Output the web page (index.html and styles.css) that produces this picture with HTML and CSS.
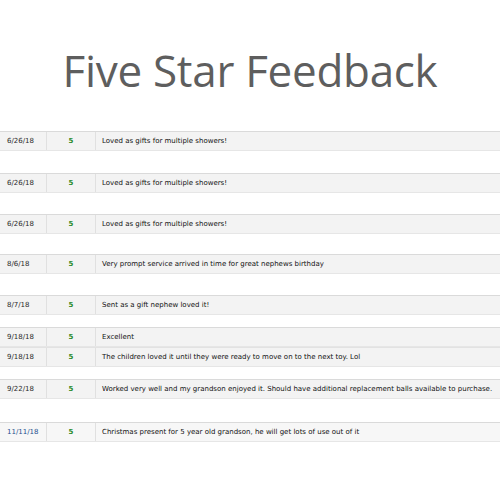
FILE: index.html
```html
<!DOCTYPE html>
<html>
<head>
<meta charset="utf-8">
<link rel="stylesheet" href="styles.css">
</head>
<body>
<h1 class="title">Five Star Feedback</h1>
<div class="list">
  <div class="row r1"><span class="date">6/26/18</span><span class="rating">5</span><span class="comment">Loved as gifts for multiple showers!</span></div>
  <div class="row r2"><span class="date">6/26/18</span><span class="rating">5</span><span class="comment">Loved as gifts for multiple showers!</span></div>
  <div class="row r3"><span class="date">6/26/18</span><span class="rating">5</span><span class="comment">Loved as gifts for multiple showers!</span></div>
  <div class="row r4"><span class="date">8/6/18</span><span class="rating">5</span><span class="comment">Very prompt service arrived in time for great nephews birthday</span></div>
  <div class="row r5"><span class="date">8/7/18</span><span class="rating">5</span><span class="comment">Sent as a gift nephew loved it!</span></div>
  <div class="row r6"><span class="date">9/18/18</span><span class="rating">5</span><span class="comment">Excellent</span></div>
  <div class="row r7"><span class="date">9/18/18</span><span class="rating">5</span><span class="comment">The children loved it until they were ready to move on to the next toy. Lol</span></div>
  <div class="row r8"><span class="date">9/22/18</span><span class="rating">5</span><span class="comment">Worked very well and my grandson enjoyed it. Should have additional replacement balls available to purchase.</span></div>
  <div class="row r9 light"><span class="date link">11/11/18</span><span class="rating">5</span><span class="comment">Christmas present for 5 year old grandson, he will get lots of use out of it</span></div>
</div>
</body>
</html>
```
FILE: styles.css
```css
html, body {
  margin: 0;
  padding: 0;
  background: #ffffff;
}
body {
  width: 500px;
  height: 500px;
  overflow: hidden;
}
.title {
  margin: 48px 0 0 0;
  height: 44px;
  font-family: "Open Sans", sans-serif;
  font-weight: 400;
  font-size: 44px;
  line-height: 44px;
  letter-spacing: -0.3px;
  color: #5e5e5e;
  text-align: center;
}
.list {
  display: flex;
  flex-direction: column;
  margin-top: 39px;
}
.row {
  box-sizing: border-box;
  height: 20px;
  display: grid;
  grid-template-columns: 47px 49px 1fr;
  align-items: stretch;
  background: #f3f3f3;
  border-top: 1px solid #dadada;
  border-bottom: 1px solid #e6e6e6;
  font-family: "DejaVu Sans", Verdana, sans-serif;
  font-size: 7px;
  color: #111;
  white-space: nowrap;
}
.row > span {
  display: flex;
  align-items: center;
}
.date {
  padding-left: 7px;
  border-right: 1px solid #e0e0e0;
  color: #2a2a2a;
}
.date.link {
  color: #1f4f8f;
}
.rating {
  justify-content: center;
  border-right: 1px solid #e0e0e0;
  color: #2a8a2a;
  font-weight: bold;
}
.comment {
  padding-left: 6px;
}
.r2 { margin-top: 22px; }
.r3 { margin-top: 21px; }
.r4 { margin-top: 20px; }
.r5 { margin-top: 21px; }
.r6 { margin-top: 12px; }
.r7 { margin-top: 0; border-top-color: #e2e2e2; }
.r8 { margin-top: 12px; }
.r9 { margin-top: 23px; }
.light { background: #f7f7f7; }
```
